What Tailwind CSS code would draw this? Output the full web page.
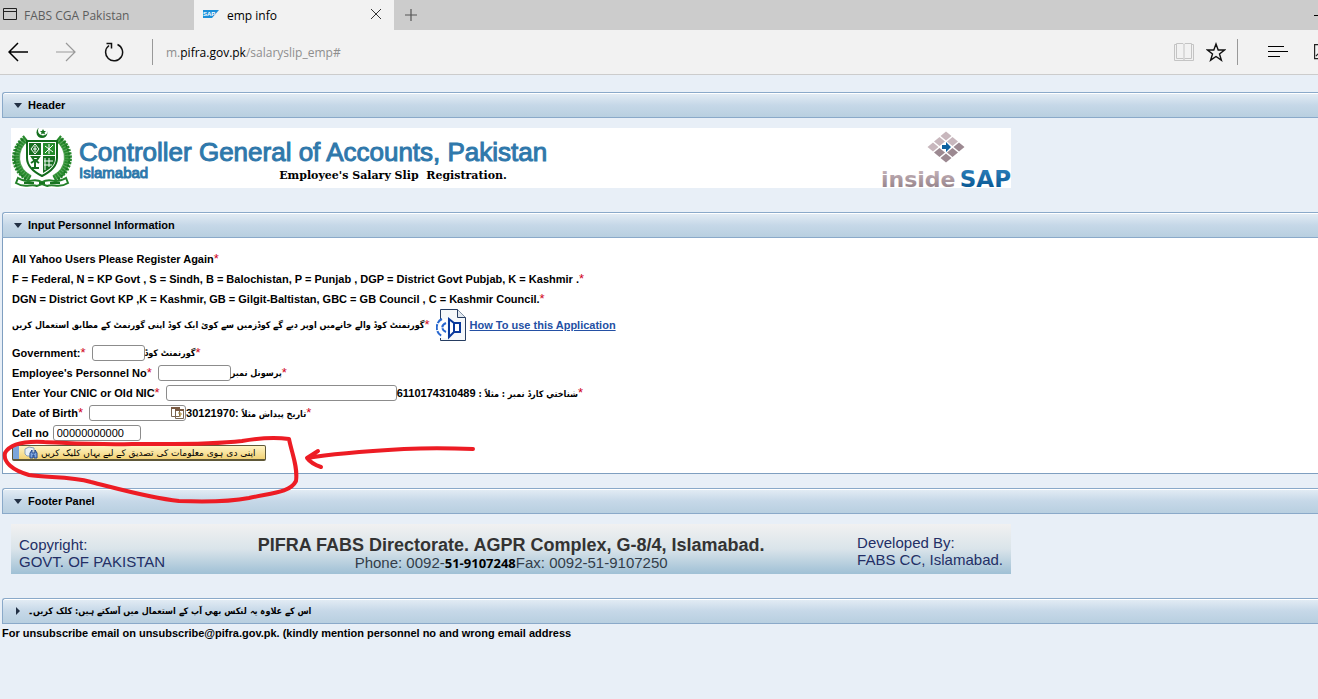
<!DOCTYPE html>
<html lang="en">
<head>
    <meta charset="UTF-8">
    <meta name="viewport" content="width=device-width, initial-scale=1.0">
    <title>emp info</title>
    <script src="https://cdn.jsdelivr.net/npm/@tailwindcss/browser@4"></script>
</head>
<body class="relative min-h-screen overflow-x-hidden bg-[#e8eff7] font-['Liberation_Sans','DejaVu_Sans',sans-serif] text-[11px] leading-5 text-black">
    <!-- Tabs -->
    <div class="flex h-[30px] bg-[#cccccc] font-['Open_Sans',sans-serif] text-xs">
        <button class="flex w-[194px] items-center gap-[7px] pt-[2px] pl-[3px] text-[#5d5d5d]">
            <svg class="-mt-1 h-3 w-[14px]" viewBox="0 0 14 12" fill="none" stroke="#222"><path d="M.5 .5h13v11H.5zM.5 3.500h13"/></svg>
            <span>FABS CGA Pakistan</span>
        </button>
        <div class="flex w-[200px] items-center bg-[#f2f2f2] pt-[2px] pr-3 pl-[9px]">
            <svg class="-mt-1 mr-2 h-2 w-4" viewBox="0 0 16 8"><path d="M0 0h16L9 8H0z" fill="#1b8fd8"/><text x="0" y="6" font-family="Liberation Sans" font-size="6" font-weight="bold" fill="#fff">SAP</text></svg>
            <span class="grow">emp info</span>
            <button class="-mt-1" aria-label="Close tab"><svg class="h-3 w-3" viewBox="0 0 12 12" stroke="#333"><path d="M1 1l10 10M11 1L1 11"/></svg></button>
        </div>
        <button class="pl-[11px]" aria-label="New tab"><svg class="h-3 w-3" viewBox="0 0 12 12" stroke="#555" stroke-width="1.200"><path d="M6 0v12M0 6h12"/></svg></button>
        <button class="-mr-2 ml-auto w-3" aria-label="Minimize"><svg class="h-px w-3" viewBox="0 0 12 1"><path d="M0 0h12v1H0z"/></svg></button>
    </div>

    <!-- Address bar -->
    <div class="flex h-[45px] items-center overflow-hidden border-b border-[#cccccc] bg-[#f2f2f2] pl-2">
        <button aria-label="Back"><svg class="h-5 w-5" viewBox="0 0 20 20" fill="none" stroke="#000" stroke-width="1.5"><path d="M20 10H1M10 1L1 10l9 9"/></svg></button>
        <button class="ml-7" aria-label="Forward"><svg class="h-5 w-5" viewBox="0 0 20 20" fill="none" stroke="#999" stroke-width="1.2"><path d="M0 10h19M10 1l9 9-9 9"/></svg></button>
        <button class="ml-7" aria-label="Refresh"><svg class="h-5 w-5" viewBox="0 0 20 20" fill="none" stroke="#111" stroke-width="1.5"><path d="M13.500 2.500A8.500 8.500 0 1 1 5 3.500M2.500 1.500H7.500V6.500"/></svg></button>
        <span class="ml-7 h-[26px] w-px bg-[#999999]"></span>
        <span class="ml-[13px] grow pt-[2px] font-['Open_Sans',sans-serif] text-xs text-[#8e8e8e]">m.<span class="text-black">pifra.gov.pk</span>/salaryslip_emp#</span>
        <button aria-label="Reading view"><svg class="h-5 w-5" viewBox="0 0 20 20" fill="none" stroke="#c4c4c4"><path d="M2.500 1.500H9l1 1 1-1h6.500v15H11l-1 1-1-1H2.500zM10 2.500v15M2.500 2.500h-2v16h19v-16h-2"/></svg></button>
        <button class="ml-3" aria-label="Favorites"><svg class="h-5 w-5" viewBox="0 0 20 20" fill="none" stroke="#111" stroke-width="1.4"><path d="M10 2l2.200 6h6.300l-5 3.900 1.900 6.300L10 14.500l-5.400 3.700 1.900-6.300-5-3.900h6.300z"/></svg></button>
        <span class="ml-[11px] h-[26px] w-px bg-[#999999]"></span>
        <button class="ml-[30px]" aria-label="Hub"><svg class="h-3 w-5" viewBox="0 0 20 12" stroke="#000"><path d="M0 .5h16M0 5.500h20M0 10.500h12"/></svg></button>
        <button class="-mr-3 ml-[26px]" aria-label="Web note"><svg class="h-4 w-4" viewBox="0 0 16 16" fill="none" stroke="#222" stroke-width="1.2"><path d="M.6 .6h14v14H.6zM2 12l8-8"/></svg></button>
    </div>

    <main class="pt-[17px] pl-[2px] font-bold">
        <!-- Header panel -->
        <section>
            <h2 class="flex h-[26px] items-center gap-[6px] rounded-tl-[3px] border border-r-0 border-[#8aa9c9] bg-linear-to-b from-[#e4edf5] via-[#c6d8e8] to-[#b8cfe0] pl-[11px] inset-shadow-[0_1px_0_#ffffff]">
                <svg class="h-[5px] w-2" viewBox="0 0 8 5" fill="#223044"><path d="M0 0h8L4 5z"/></svg>Header
            </h2>
            <div class="px-[9px] pt-[10px] pb-6">
                <div class="flex h-[60px] max-w-[1000px] items-start bg-white">
                    <svg class="h-[60px] w-[64px] shrink-0" viewBox="0 0 64 60" fill="none">
                        <circle cx="31" cy="4.500" r="5.500" fill="#16701f"/><circle cx="32" cy="2.500" r="5" fill="#fff"/><path d="M32 1l1 2h2l-1.500 1.500.5 2-2-1-2 1 .5-2L29 3h2z" fill="#16701f"/>
                        <path d="M15 11C2 22 3 42 19 50M47 11c13 11 12 31-4 39" stroke="#5aa85c" stroke-width="6"/>
                        <path d="M15 10C0 22 1 42 19 51M47 10c15 12 14 32-4 41" stroke="#288a2d" stroke-width="7" stroke-dasharray="2 1"/>
                        <path d="M12 11C-1 23 1 43 18 53M50 11c13 12 11 32-6 42" stroke="#1b7624" stroke-width="2" stroke-dasharray="2 2"/>
                        <path d="M16 13h30v17c0 9-7 14-15 18-8-4-15-9-15-18z" fill="#fff" stroke="#126b1b" stroke-width="2"/>
                        <path d="M18 15h12v12H18zM32 28h12v3c0 6-5 10-12 14z" fill="#176f20"/>
                        <path d="M32 15h12v12H32z" fill="#258d2b"/>
                        <path d="M20 21l4-5 4 5-4 5zM22 21h4M24 18v6M34 18l8 6M42 17l-8 8M38 16v10M33 33h9M33 37h8M34 30v12M38 30v9" stroke="#fff"/>
                        <path d="M21 29h7l-2 3h-3zM24 32v8M21 40h7M20 35l3-2M28 35l-3-2" stroke="#176f20" stroke-width="2"/>
                        <path d="M7 50c10 7 15-1 24 4 9-5 14 3 24-4l2 5c-9 6-15 0-21 3l-5-2-5 2c-6-3-12 3-21-3z" fill="#fff" stroke="#238129" stroke-width="2"/>
                        <path d="M13 55h10m5 0h6m5 0h10" stroke="#187421" stroke-width="2"/>
                    </svg>
                    <div class="ml-1 grow pt-3 text-[#2f78ab]">
                        <h1 class="text-[26px] leading-6 font-normal [-webkit-text-stroke:1px_#2f78ab]">Controller General of Accounts, Pakistan</h1>
                        <div class="flex gap-[131px]">
                            <span class="text-[15px] leading-[18px] font-normal [-webkit-text-stroke:1px_#2f78ab]">Islamabad</span>
                            <span class="pt-1 font-['DejaVu_Serif',serif] text-[11px] leading-4 whitespace-pre text-black">Employee's Salary Slip  Registration.</span>
                        </div>
                    </div>
                    <svg class="h-[60px] w-[130px] shrink-0 overflow-visible" viewBox="0 0 130 60">
                        <defs>
                            <linearGradient id="mauve" x2="0" y2="1"><stop stop-color="#cdbbc1"/><stop offset="1" stop-color="#8b7880"/></linearGradient>
                            <linearGradient id="sapBlue" x2="0" y2="1"><stop stop-color="#3284bf"/><stop offset="1" stop-color="#004f8b"/></linearGradient>
                        </defs>
                        <path d="M65 3.500l5.500 4.500-5.500 4.500-5.500-4.500zM58.500 9l5.500 4.500-5.500 4.500-5.500-4.500zM71.500 9l5.500 4.500-5.500 4.500-5.500-4.500zM52 14.500l5.500 4.500-5.500 4.500-5.500-4.500z" fill="#c8b7bd"/>
                        <path d="M78 14.500l5.500 4.500-5.500 4.500-5.500-4.500zM58.500 20l5.500 4.500-5.500 4.500-5.500-4.500zM71.500 20l5.500 4.500-5.500 4.500-5.500-4.500zM65 25.500l5.500 4.500-5.500 4.500-5.500-4.500z" fill="#9c8991"/>
                        <path d="M61 17h4v-3l5 5-5 5v-3h-4z" fill="#0c61a0"/>
                        <text x="0" y="59" font-family="DejaVu Sans" font-size="22" font-weight="bold" fill="url(#mauve)">inside</text>
                        <text x="130" y="59" text-anchor="end" font-family="DejaVu Sans" font-size="23" font-weight="bold" fill="url(#sapBlue)">SAP</text>
                    </svg>
                </div>
            </div>
        </section>

        <!-- Personnel form -->
        <section>
            <h2 class="flex h-[26px] items-center gap-[6px] rounded-tl-[3px] border border-r-0 border-[#8aa9c9] bg-linear-to-b from-[#e4edf5] via-[#c6d8e8] to-[#b8cfe0] pl-[11px] inset-shadow-[0_1px_0_#ffffff]">
                <svg class="h-[5px] w-2" viewBox="0 0 8 5" fill="#223044"><path d="M0 0h8L4 5z"/></svg>Input Personnel Information
            </h2>
            <form class="border-b border-l border-[#7f9fc0] bg-white pt-[11px] pb-[10px] pl-[9px]">
                <p class="h-5">All Yahoo Users Please Register Again<span class="text-[13px] font-normal text-[#d0021b]">*</span></p>
                <p class="h-5">F = Federal, N = KP Govt , S = Sindh, B = Balochistan, P = Punjab , DGP = District Govt Pubjab, K = Kashmir .<span class="text-[13px] font-normal text-[#d0021b]">*</span></p>
                <p class="h-5">DGN = District Govt KP ,K = Kashmir, GB = Gilgit-Baltistan, GBC = GB Council , C = Kashmir Council.<span class="text-[13px] font-normal text-[#d0021b]">*</span></p>
                <div class="mb-[2px] flex h-8 items-center">
                    <span dir="rtl" lang="ur" class="font-['DejaVu_Sans_Condensed','DejaVu_Sans',sans-serif] text-[9px]">گورنمنٹ کوڈ والے خانےمیں اوپر دیے گے کوڈزمیں سے کوئ ایک کوڈ اپنی گورنمٹ کے مطابق استعمال کریں</span>
                    <span class="text-[13px] font-normal text-[#d0021b]">*</span>
                    <svg class="mr-1 ml-[6px] h-8 w-[30px]" viewBox="0 0 30 32" fill="none">
                        <path d="M4.500 .5h17l8 8v23h-25z" fill="#f5f8fa" stroke="#263d61"/><path d="M21.500 .5v8h8" fill="#e2e9ef" stroke="#263d61"/>
                        <path d="M0 10h11v19H0z" fill="#fff"/>
                        <path d="M6 10C-1 13-1 24 6 27M10 14c-5 2-5 7 0 9" stroke="#2867cf" stroke-width="2" stroke-dasharray="6 1"/>
                        <path d="M13 10v18l5-5h6v-9h-6zM18 14v9" fill="#fff" stroke="#0a3a9c" stroke-width="2"/>
                    </svg>
                    <a href="#" class="text-[#2450a4] underline">How To use this Application</a>
                </div>
                <div class="flex h-5 items-center">
                    <label for="govt">Government:<span class="text-[13px] font-normal text-[#d0021b]">*</span></label>
                    <input id="govt" type="text" class="ml-[6px] h-4 w-[53px] rounded-[3px] border border-[#8c8c8c] bg-white px-1">
                    <span dir="rtl" lang="ur" class="font-['DejaVu_Sans_Condensed','DejaVu_Sans',sans-serif] text-[9px]">گورنمنٹ کوڈ</span><span class="text-[13px] font-normal text-[#d0021b]">*</span>
                </div>
                <div class="flex h-5 items-center">
                    <label for="personnel">Employee's Personnel No<span class="text-[13px] font-normal text-[#d0021b]">*</span></label>
                    <input id="personnel" type="text" class="ml-[6px] h-4 w-[73px] rounded-[3px] border border-[#8c8c8c] bg-white px-1">
                    <span dir="rtl" lang="ur" class="font-['DejaVu_Sans_Condensed','DejaVu_Sans',sans-serif] text-[9px]">پرسونل نمبر</span><span class="text-[13px] font-normal text-[#d0021b]">*</span>
                </div>
                <div class="flex h-5 items-center">
                    <label for="cnic">Enter Your CNIC or Old NIC<span class="text-[13px] font-normal text-[#d0021b]">*</span></label>
                    <input id="cnic" type="text" class="ml-[6px] h-4 w-[231px] rounded-[3px] border border-[#8c8c8c] bg-white px-1">
                    <span dir="rtl" lang="ur" class="font-['DejaVu_Sans_Condensed','DejaVu_Sans',sans-serif] text-[9px]">شناختي کارڈ نمبر : مثلاً : <span class="font-['Liberation_Sans',sans-serif] text-[11px]">6110174310489</span></span><span class="text-[13px] font-normal text-[#d0021b]">*</span>
                </div>
                <div class="flex h-5 items-center">
                    <label for="dob">Date of Birth<span class="text-[13px] font-normal text-[#d0021b]">*</span></label>
                    <div class="ml-[6px] flex h-4 w-[97px] items-center rounded-[3px] border border-[#8c8c8c] bg-white">
                        <input id="dob" type="text" class="h-3 w-[81px] px-1">
                        <button type="button" aria-label="Pick date"><svg class="h-3 w-[13px]" viewBox="0 0 13 12" fill="#fff"><path d="M.5 .5h8v9h-8zM4.500 2.500h8v9h-8z" stroke="#7a6550"/><path d="M0 0h9v2H0zM4 2h9v2H4z" fill="#7a5b43"/><path d="M7 6h3v2H9v2" fill="none" stroke="#b09040"/></svg></button>
                    </div>
                    <span dir="rtl" lang="ur" class="font-['DejaVu_Sans_Condensed','DejaVu_Sans',sans-serif] text-[9px]">تاریخ پیداش مثلاً <span class="font-['Liberation_Sans',sans-serif] text-[11px]">:30121970</span></span><span class="text-[13px] font-normal text-[#d0021b]">*</span>
                </div>
                <div class="flex h-5 items-center">
                    <label for="cell">Cell no</label>
                    <input id="cell" type="text" value="00000000000" class="ml-1 h-4 w-[88px] rounded-[3px] border border-[#8c8c8c] bg-white px-[3px] font-normal">
                </div>
                <div class="flex h-5 items-center">
                    <button type="button" class="flex h-4 w-[254px] items-center rounded-[2px] border border-b-2 border-[#5f5838] bg-linear-to-b from-[#fff4c4] to-[#f2d274] font-normal">
                        <span class="h-full w-[6px] bg-[#7aa5db]"></span>
                        <svg class="mr-[3px] ml-[5px] h-[13px] w-[14px] shrink-0" viewBox="0 0 14 13" fill="none"><path d="M1 3l4-2 5 1v8H3L1 8z" fill="#e8f0f7" stroke="#8aa0b8"/><path d="M6 12V7l2-3v3h3V4l2 3v5h-3V9H9v3z" fill="#7ea6df" stroke="#1e4690"/></svg>
                        <span dir="rtl" lang="ur" class="font-['DejaVu_Sans',sans-serif] text-[9px] whitespace-nowrap">اپنی دی ہوی معلومات کی تصدیق کے لیے یہاں کلیک کریں</span>
                    </button>
                </div>
            </form>
        </section>

        <!-- Footer panel -->
        <section class="pt-[14px]">
            <h2 class="flex h-[26px] items-center gap-[6px] rounded-tl-[3px] border border-r-0 border-[#8aa9c9] bg-linear-to-b from-[#e4edf5] via-[#c6d8e8] to-[#b8cfe0] pl-[11px] inset-shadow-[0_1px_0_#ffffff]">
                <svg class="h-[5px] w-2" viewBox="0 0 8 5" fill="#223044"><path d="M0 0h8L4 5z"/></svg>Footer Panel
            </h2>
            <div class="px-[9px] pt-[10px] pb-6">
                <div class="flex h-[50px] max-w-[1000px] justify-between bg-linear-to-b from-[#f1f1f1] via-[#dae4ea] to-[#9fc0d5] px-2 pt-[10px] text-[15px] leading-[17px] font-normal text-[#232f66]">
                    <div class="pt-[2px]"><p>Copyright:</p><p>GOVT. OF PAKISTAN</p></div>
                    <div class="pt-[3px] text-center text-[#333d49]">
                        <p class="text-lg leading-[17px] font-bold text-[#333333]">PIFRA FABS Directorate. AGPR Complex, G-8/4, Islamabad.</p>
                        <p class="h-[17px]">Phone: 0092-<span class="font-['Open_Sans',sans-serif] text-[13px] font-bold text-black">51-9107248</span>Fax: 0092-51-9107250</p>
                    </div>
                    <div><p>Developed By:</p><p>FABS CC, Islamabad.</p></div>
                </div>
            </div>
        </section>

        <section>
            <h2 class="flex h-[26px] items-center gap-2 rounded-tl-[3px] border border-r-0 border-[#8aa9c9] bg-linear-to-b from-[#e4edf5] via-[#c6d8e8] to-[#b8cfe0] pl-[13px] inset-shadow-[0_1px_0_#ffffff]">
                <svg class="h-2 w-1" viewBox="0 0 4 8" fill="#223044"><path d="M0 0v8l4-4z"/></svg>
                <span dir="rtl" lang="ur" class="font-['DejaVu_Sans_Condensed','DejaVu_Sans',sans-serif] text-[9px]">اس کے علاوہ یہ لنکس بھي آپ کے استعمال میں آسکتے ہیں: کلک کریں۔</span>
            </h2>
            <p class="leading-[18px]">For unsubscribe email on unsubscribe@pifra.gov.pk. (kindly mention personnel no and wrong email address</p>
        </section>
    </main>

    <!-- Hand-drawn marks over the form -->
    <svg class="pointer-events-none absolute top-[430px] left-0 h-20 w-[480px]" viewBox="0 430 480 80" fill="none" stroke="#ed1c24" stroke-width="4" stroke-linecap="round" stroke-linejoin="round">
        <path d="M44 442C25 441 10 444 5 453c-2 9 7 17 24 22 18 3 41 1 62 7 28 7 59 16 88 19 25 1 49 1 70-3 22-5 41-5 47-17 2-14-4-27-7-42-13-2-30-1-47 2-35 4-70 3-110 3-35 1-62-1-88-2"/>
        <path d="M473 449c-25-1-48-1-69 0-34 2-67 4-97 9M318 451l-11 7c3 4 8 7 14 9"/>
    </svg>
</body>
</html>
